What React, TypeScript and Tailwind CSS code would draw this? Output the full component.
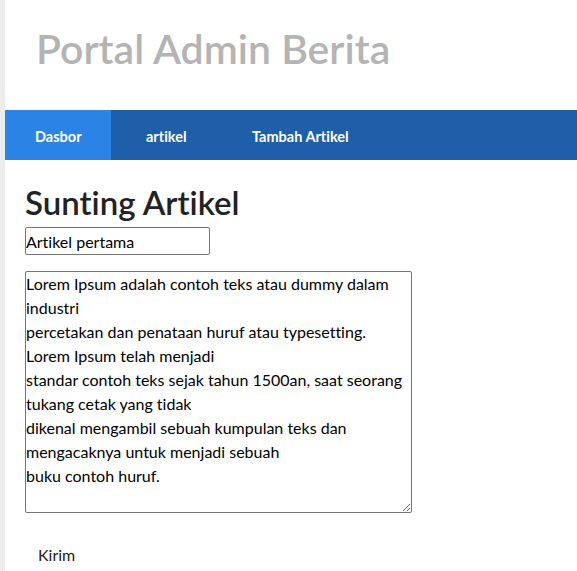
const body = `Lorem Ipsum adalah contoh teks atau dummy dalam industri
percetakan dan penataan huruf atau typesetting. Lorem Ipsum telah menjadi
standar contoh teks sejak tahun 1500an, saat seorang tukang cetak yang tidak
dikenal mengambil sebuah kumpulan teks dan mengacaknya untuk menjadi sebuah
buku contoh huruf.`;

const App: React.FC = () => {
  return (
    <div className="flex min-h-[571px] bg-white font-['Segoe_UI','Lato','Noto_Sans',sans-serif] [font-variant-ligatures:none]">
      <div className="w-[5px] shrink-0 bg-[#ececec]" />
      <div className="flex-1">
        <header className="h-[110px] flex items-center pl-[31px] pb-[12px]">
          <h1 className="text-[41px] font-semibold text-[#b4b4b4]">Portal Admin Berita</h1>
        </header>
        <nav className="flex h-[50px] bg-[#1f5fa9] text-[14.5px] font-bold text-white">
          <a className="flex items-center w-[106px] pl-[30px] pt-[3px] bg-[#2b83e6]">Dasbor</a>
          <a className="flex items-center w-[106px] pl-[35px] pt-[3px]">artikel</a>
          <a className="flex items-center pl-[35px] pt-[3px]">Tambah Artikel</a>
        </nav>
        <main className="px-[20px] pt-[22px]">
          <h2 className="text-[33px] font-semibold leading-[40px] text-[#222]">Sunting Artikel</h2>
          <input
            defaultValue="Artikel pertama"
            className="block mt-[5px] w-[185px] h-[28px] border border-[#767676] rounded-[2px] px-0 text-[16px] text-black"
          />
          <textarea
            defaultValue={body}
            className="block mt-[16px] w-[387px] h-[242px] border border-[#767676] rounded-[2px] p-0 text-[16px] leading-[24px] text-black"
          />
          <button className="mt-[30px] ml-[13px] text-[16px] text-[#222]">Kirim</button>
        </main>
      </div>
    </div>
  );
};

export default App;
